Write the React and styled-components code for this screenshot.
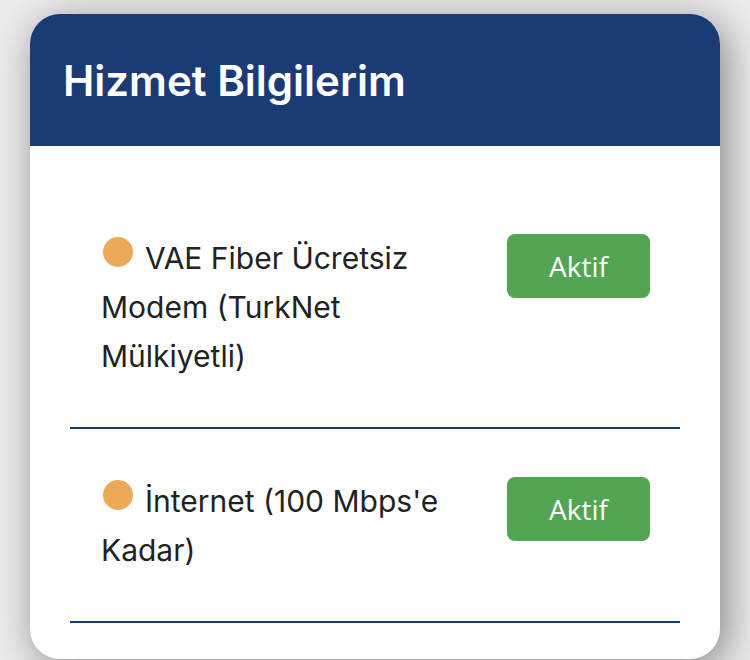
import styled, { createGlobalStyle } from "styled-components";

const GlobalStyle = createGlobalStyle`
  body {
    margin: 0;
    background: #ececec;
    font-family: Inter, "Noto Sans", sans-serif;
  }
`;

const services = [
  { id: 1, name: "VAE Fiber Ücretsiz Modem (TurkNet Mülkiyetli)", status: "Aktif" },
  { id: 2, name: "İnternet (100 Mbps'e Kadar)", status: "Aktif" },
];

const App = () => {
  return (
    <>
      <GlobalStyle />
      <Page>
        <Card>
          <Header>
            <Title>Hizmet Bilgilerim</Title>
          </Header>
          <Body>
            {services.map((s) => (
              <Item key={s.id}>
                <Row>
                  <Name>
                    <Dot />
                    {s.name}
                  </Name>
                  <StatusButton>{s.status}</StatusButton>
                </Row>
                <Divider />
              </Item>
            ))}
          </Body>
        </Card>
      </Page>
    </>
  );
};

export default App;

const Page = styled.div`
  padding: 14px 30px 0;
  height: 660px;
  box-sizing: border-box;
  overflow: hidden;
`;

const Card = styled.div`
  background: #ffffff;
  border-radius: 30px;
  overflow: hidden;
  box-shadow: 6px 8px 40px rgba(0, 0, 0, 0.45);
  padding-bottom: 36px;
`;

const Header = styled.div`
  background: #1b3a76;
  height: 132px;
  display: flex;
  align-items: center;
  padding-left: 33px;
`;

const Title = styled.h1`
  margin: 0;
  color: #ffffff;
  font-size: 42px;
  font-weight: 600;
  letter-spacing: 0;
`;

const Body = styled.div`
  padding: 40px 40px 0;
`;

/* Bir hizmet satırı ve altındaki çizgi */
const Item = styled.div`
  display: flex;
  flex-direction: column;
`;

const Row = styled.div`
  display: flex;
  align-items: flex-start;
  justify-content: space-between;
  gap: 40px;
  padding: 48px 30px 46px 31px;
`;

const Name = styled.div`
  flex: 1;
  font-size: 30px;
  line-height: 49px;
  color: #222222;
`;

const Dot = styled.span`
  display: inline-block;
  width: 30px;
  height: 30px;
  border-radius: 50%;
  background: #eca957;
  margin: 0 12px 0 2px;
  vertical-align: 2px;
`;

const StatusButton = styled.button`
  flex: none;
  width: 143px;
  height: 64px;
  border: none;
  border-radius: 8px;
  background: #52a552;
  color: #ffffff;
  font-family: "Open Sans", sans-serif;
  font-size: 28px;
  padding: 0;
`;

const Divider = styled.div`
  height: 2px;
  background: #1b3a76;
`;
